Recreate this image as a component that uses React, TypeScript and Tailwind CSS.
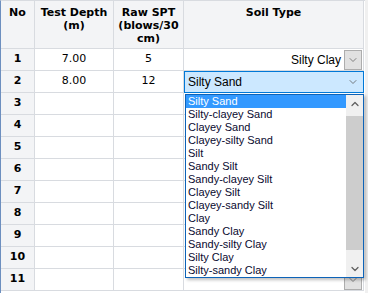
import { ChevronDown, ChevronUp } from 'lucide-react';

const ROWS: { no: number; depth: string; spt: string }[] = [
  { no: 1, depth: '7.00', spt: '5' },
  { no: 2, depth: '8.00', spt: '12' },
  ...Array.from({ length: 9 }, (_, i) => ({ no: i + 3, depth: '', spt: '' })),
];

const SOIL_TYPES = [
  'Silty Sand',
  'Silty-clayey Sand',
  'Clayey Sand',
  'Clayey-silty Sand',
  'Silt',
  'Sandy Silt',
  'Sandy-clayey Silt',
  'Clayey Silt',
  'Clayey-sandy Silt',
  'Clay',
  'Sandy Clay',
  'Sandy-silty Clay',
  'Silty Clay',
  'Silty-sandy Clay',
];

const UI_FONT = { fontFamily: '"Liberation Sans", Arial, sans-serif' };

const cell = 'border-r border-b border-[#d8dbe0] h-[22px] flex items-center';
const head =
  'h-[48px] border-r border-b border-[#d8dbe0] bg-[#f3f4f6] font-bold text-center leading-[13px] pt-[5px] text-[11px]';

function SmallDrop() {
  return (
    <div className="w-[18px] h-[20px] border border-[#adadad] bg-[#e1e1e1] flex items-center justify-center">
      <ChevronDown className="w-3 h-3 text-[#606060]" strokeWidth={1.5} />
    </div>
  );
}

export default function App() {
  return (
    <div
      className="relative w-[368px] h-[293px] bg-[#f0f0f0] overflow-hidden text-[12px] text-black"
      style={{ fontFamily: 'Tahoma, "DejaVu Sans", sans-serif' }}
    >
      <div className="w-[365px] h-[293px] bg-white border-l border-[#6d8fbf] border-t border-t-[#d8dbe0]">
        <div className="grid grid-cols-[34px_79px_70px_180px]">
          {/* Header */}
          <div className={head}>No</div>
          <div className={head}>
            Test Depth
            <br />
            (m)
          </div>
          <div className={head}>
            Raw SPT
            <br />
            (blows/30
            <br />
            cm)
          </div>
          <div className={head}>Soil Type</div>

          {ROWS.map((r) => (
            <div key={r.no} className="contents">
              <div className={`${cell} justify-center bg-[#f3f4f6] font-bold text-[11px]`}>{r.no}</div>
              <div className={`${cell} justify-center text-[11px]`}>{r.depth}</div>
              <div className={`${cell} justify-center text-[11px]`}>{r.spt}</div>
              {r.no === 1 ? (
                <div className={`${cell} justify-end gap-[3px] pr-[1px]`}>
                  <span style={UI_FONT} className="text-[12px]">
                    Silty Clay
                  </span>
                  <SmallDrop />
                </div>
              ) : r.no === 2 ? (
                <div className="h-[22px] border border-[#0078d7] bg-[#cce8ff] flex items-center justify-between pl-[3px] pr-[4px]">
                  <span style={UI_FONT} className="text-[12px]">
                    Silty Sand
                  </span>
                  <ChevronDown className="w-3 h-3 text-[#555]" strokeWidth={1.5} />
                </div>
              ) : r.no === 11 ? (
                <div className={`${cell} justify-end pr-[1px]`}>
                  <SmallDrop />
                </div>
              ) : (
                <div className={cell} />
              )}
            </div>
          ))}
        </div>
      </div>

      {/* Open dropdown list */}
      <div
        className="absolute left-[185px] top-[94px] w-[179px] h-[184px] bg-white border border-[#0d63b8] flex shadow-[2px_2px_3px_rgba(0,0,0,0.25)]"
        style={UI_FONT}
      >
        <div className="flex-1 flex flex-col">
          {SOIL_TYPES.map((s, i) => (
            <div
              key={s}
              className={`h-[13px] leading-[13px] pl-[2px] text-[11px] whitespace-nowrap overflow-hidden ${
                i === 0 ? 'bg-[#3399ff] text-white' : 'text-[#0a0a30]'
              }`}
            >
              {s}
            </div>
          ))}
        </div>
        <div className="w-[17px] bg-[#f0f0f0] flex flex-col">
          <div className="h-[17px] flex items-center justify-center">
            <ChevronUp className="w-3 h-3 text-[#606060]" strokeWidth={2.5} />
          </div>
          <div className="mt-[4px] h-[134px] bg-[#cdcdcd]" />
          <div className="flex-1" />
          <div className="h-[17px] flex items-center justify-center">
            <ChevronDown className="w-3 h-3 text-[#606060]" strokeWidth={2.5} />
          </div>
        </div>
      </div>
    </div>
  );
}
